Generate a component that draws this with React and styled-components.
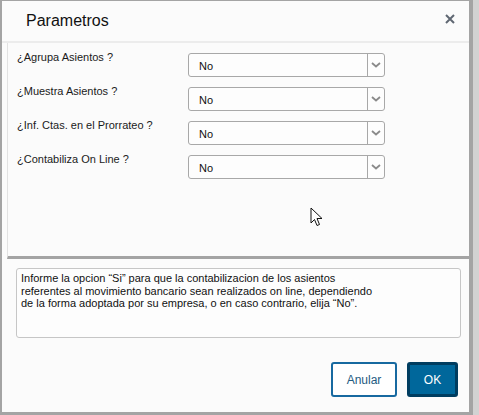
import React from "react";
import styled, { createGlobalStyle } from "styled-components";

const GlobalStyle = createGlobalStyle`
  html, body {
    margin: 0;
    padding: 0;
    background: #d2d2d2;
  }
  body {
    font-family: "Liberation Sans", Arial, sans-serif;
    color: #222;
  }
`;

const Page = styled.div`
  width: 479px;
  height: 415px;
  position: relative;
  overflow: hidden;
`;

const Dialog = styled.div`
  width: 467px;
  height: 411px;
  background: #fbfbfb;
  border-left: 2px solid #a4a4a4;
  border-top: 1px solid #a4a4a4;
  border-right: 4px solid #a4a4a4;
  border-bottom: 3px solid #a4a4a4;
  display: flex;
  flex-direction: column;
`;

const Header = styled.div`
  height: 40px;
  border-bottom: 2px solid #ececec;
  display: flex;
  align-items: center;
  justify-content: space-between;
  padding: 0 13px 0 24px;
`;

const Title = styled.h1`
  margin: 0;
  font-size: 16px;
  font-weight: normal;
  color: #111;
  padding-bottom: 1px;
`;

const Close = styled.button`
  border: none;
  background: none;
  padding: 0;
  width: 12px;
  height: 12px;
  margin-top: -4px;
  display: flex;
  align-items: center;
  justify-content: center;
`;

const Body = styled.div`
  margin-left: 5px;
  height: 205px;
  border-left: 1px solid #e2e2e2;
  border-bottom: 3px solid #a4a4a4;
  padding: 8px 0 0 9px;
  position: relative;
`;

const Row = styled.div`
  display: flex;
  align-items: flex-start;
  height: 34px;
`;

const Label = styled.span`
  width: 171px;
  font-size: 11px;
  color: #1a1a1a;
`;

const Select = styled.div`
  margin-top: 2px;
  width: 195px;
  height: 22px;
  border: 1px solid #a8a8a8;
  border-radius: 3px;
  background: #fdfdfd;
  display: flex;
  align-items: center;
`;

const SelectValue = styled.span`
  flex: 1;
  padding-left: 10px;
  font-size: 11px;
  color: #111;
  padding-top: 1px;
`;

const Arrow = styled.span`
  width: 16px;
  height: 22px;
  border-left: 1px solid #a8a8a8;
  display: flex;
  align-items: center;
  justify-content: center;
`;

const Cursor = styled.svg`
  position: absolute;
  left: 302px;
  top: 164px;
`;

const Footer = styled.div`
  flex: 1;
  padding: 9px 8px 15px 14px;
  display: flex;
  flex-direction: column;
`;

const Help = styled.div`
  height: 63px;
  border: 1px solid #c6c6c6;
  border-radius: 3px;
  background: #fdfdfd;
  padding: 3px 0 2px 4px;
  font-size: 11px;
  line-height: 12.5px;
  color: #111;
`;

const Actions = styled.div`
  margin-top: auto;
  margin-right: 3px;
  display: flex;
  justify-content: flex-end;
  gap: 10px;
`;

const Button = styled.button`
  height: 35px;
  border-radius: 3px;
  font-family: "Liberation Sans", Arial, sans-serif;
  font-size: 12px;
  cursor: pointer;
  width: ${(p) => (p.primary ? "51px" : "66px")};
  background: ${(p) => (p.primary ? "#00679b" : "#fff")};
  color: ${(p) => (p.primary ? "#fff" : "#245b82")};
  border: ${(p) => (p.primary ? "3px solid #003d60" : "2px solid #1769a0")};
`;

const Chevron = () => (
  <svg width="10" height="6" viewBox="0 0 10 6">
    <path d="M1 1 L5 4.5 L9 1" fill="none" stroke="#8a8a8a" strokeWidth="1.8" />
  </svg>
);

const params = [
  "¿Agrupa Asientos ?",
  "¿Muestra Asientos ?",
  "¿Inf. Ctas. en el Prorrateo ?",
  "¿Contabiliza On Line ?",
];

const App = () => {
  return (
    <Page>
      <GlobalStyle />
      <Dialog>
        <Header>
          <Title>Parametros</Title>
          <Close aria-label="Cerrar">
            <svg width="10" height="10" viewBox="0 0 10 10">
              <path d="M1 1 L9 9 M9 1 L1 9" stroke="#5f6772" strokeWidth="2" />
            </svg>
          </Close>
        </Header>
        <Body>
          {params.map((p) => (
            <Row key={p}>
              <Label>{p}</Label>
              <Select>
                <SelectValue>No</SelectValue>
                <Arrow>
                  <Chevron />
                </Arrow>
              </Select>
            </Row>
          ))}
          <Cursor width="13" height="20" viewBox="0 0 13 20">
            <path
              d="M1 1 L1 16 L4.5 12.5 L7 18.5 L9.5 17.5 L7 11.5 L12 11.5 Z"
              fill="#fff"
              stroke="#111"
              strokeWidth="1"
              strokeLinejoin="round"
            />
          </Cursor>
        </Body>
        <Footer>
          <Help>
            Informe la opcion “Si” para que la contabilizacion de los asientos
            <br />
            referentes al movimiento bancario sean realizados on line, dependiendo
            <br />
            de la forma adoptada por su empresa, o en caso contrario, elija “No”.
          </Help>
          <Actions>
            <Button>Anular</Button>
            <Button primary>OK</Button>
          </Actions>
        </Footer>
      </Dialog>
    </Page>
  );
};

export default App;
